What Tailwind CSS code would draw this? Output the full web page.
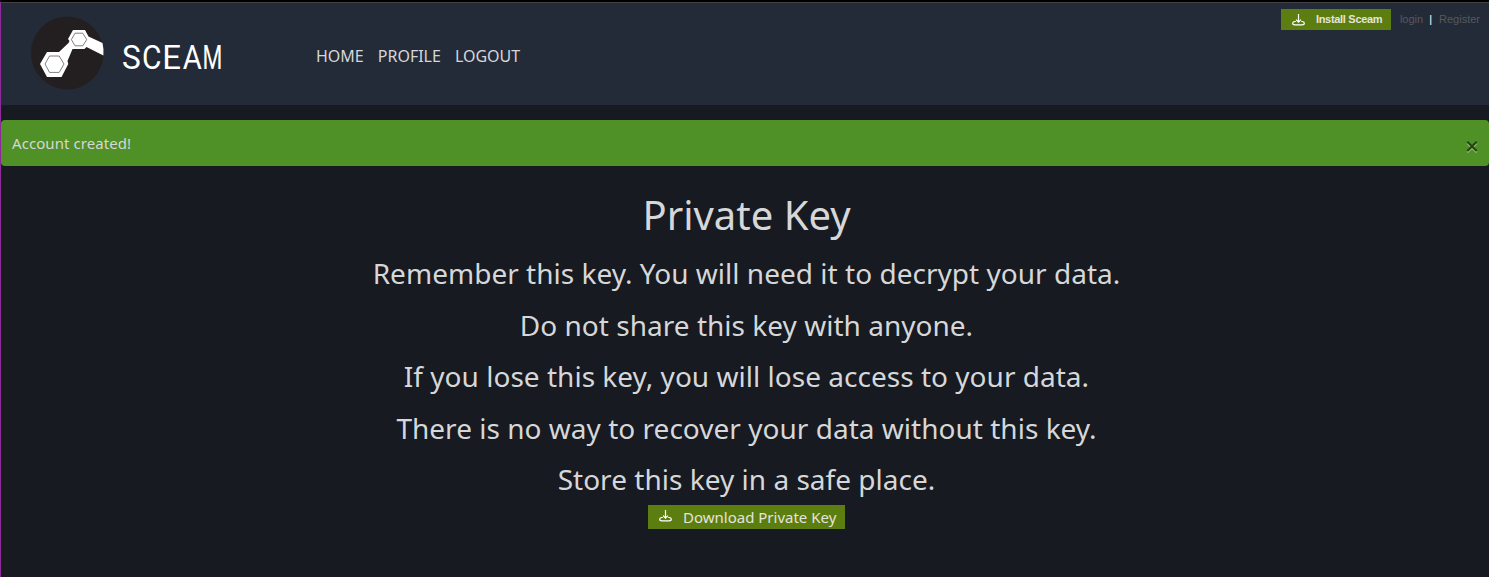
<!DOCTYPE html>
<html lang="en">
<head>
<meta charset="utf-8">
<title>Sceam</title>
<script src="https://cdn.jsdelivr.net/npm/@tailwindcss/browser@4"></script>
</head>
<body class="h-[577px] overflow-hidden border-t-2 border-black bg-[#171a21] font-['Noto_Sans',sans-serif] text-[#d6d7d8]">
<div class="h-[575px] border-l border-[#8f2a9a]">
  <header class="flex h-[103px] items-start border-t border-[#424242] bg-[#242b38]">
    <svg class="ml-[29px] mt-[12px] h-20 w-[200px] shrink-0" viewBox="30 15 200 80">
      <circle cx="67.3" cy="53" r="36.4" fill="#231f20"/>
      <path d="M47 52H59L68.5 43L69.5 41L68 39L73 30H85L88.5 36.5L102.5 43Q104 49 103.4 55.5L86.5 47L84.5 49H72.5L67.5 61L68.3 64L61.5 77H47L40 64Z" fill="#fff"/>
      <path d="M49.5 56H59.2L64 64L59.2 72.4H49.5L45 64ZM75 33.2H82.8L86.7 39.6L82.8 45.8H75L71.4 39.6Z" fill="none" stroke="#55565a" stroke-width=".75"/>
      <g fill="#fff" font-family="Roboto, sans-serif" font-size="34">
        <text transform="translate(122 69) scale(.93 1)">S</text>
        <text transform="translate(142 69) scale(.88 1)">C</text>
        <text transform="translate(162.3 69) scale(.97 1)">E</text>
        <text transform="translate(182.8 69) scale(.86 1)">A</text>
        <text transform="translate(202.6 69) scale(.67 1)">M</text>
      </g>
    </svg>
    <nav class="ml-[86px] mt-[41px] flex gap-[14px] text-base leading-6">
      <a>HOME</a><a>PROFILE</a><a>LOGOUT</a>
    </nav>
    <div class="ml-auto mr-[9px] mt-[6px] flex items-center font-['Liberation_Sans',sans-serif] text-[11px] leading-[21px] text-[#56595e]">
      <a class="flex h-[21px] w-[110px] items-center bg-[#5c7e10] text-[#e5e4dc]">
        <svg class="ml-[11px] mr-[11px] h-3 w-[13px]" viewBox="0 0 13 12" fill="none" stroke="#fff" stroke-width="1.2"><path d="M6.5 0V8M4 5.6L6.5 8.2L9 5.6M3.8 7.5H2.5Q.7 7.9.7 9.3Q.7 10.9 3 10.9H10Q12.3 10.9 12.3 9.3Q12.3 7.9 10.5 7.5H9.2"/></svg>
        <span class="font-bold tracking-[-0.3px]">Install Sceam</span>
      </a>
      <a class="ml-[9px]">login</a><span class="ml-[6px] mr-[7px] text-white">|</span><a>Register</a>
    </div>
  </header>
  <div class="mt-[15px] flex h-[46px] items-center justify-between rounded-[4px] bg-[#4f9027] pl-[11px] pr-[11px]">
    <span class="text-[15px] leading-6 tracking-[0.07px]">Account created!</span>
    <svg class="mt-[6px] h-[13px] w-[12px]" viewBox="0 0 12 13" fill="none" stroke-width="2"><path d="M1.3 3.2L10.7 12.4M10.7 3.2L1.3 12.4" stroke="#91bb78"/><path d="M1.3 1.8L10.7 11M10.7 1.8L1.3 11" stroke="#25430f"/></svg>
  </div>
  <main class="flex flex-col items-center pl-[3px]">
    <h1 class="mt-[25px] h-[57px] text-[40px] leading-[48px]">Private Key</h1>
    <div class="grid h-[257px] auto-rows-[51.5px] text-center text-[28px] leading-[51.5px] tracking-[0.02px]">
      <h3>Remember this key. You will need it to decrypt your data.</h3>
      <h3>Do not share this key with anyone.</h3>
      <h3>If you lose this key, you will lose access to your data.</h3>
      <h3>There is no way to recover your data without this key.</h3>
      <h3>Store this key in a safe place.</h3>
    </div>
    <a class="flex h-6 w-[197px] items-center bg-[#5c7e10] text-[15px] leading-6 text-[#e5e4dc]">
      <svg class="ml-[11px] mr-[11px] mb-[2px] h-3 w-[13px]" viewBox="0 0 13 12" fill="none" stroke="#fff" stroke-width="1.2"><path d="M6.5 0V8M4 5.6L6.5 8.2L9 5.6M3.8 7.5H2.5Q.7 7.9.7 9.3Q.7 10.9 3 10.9H10Q12.3 10.9 12.3 9.3Q12.3 7.9 10.5 7.5H9.2"/></svg>
      <span class="whitespace-nowrap">Download Private Key</span>
    </a>
  </main>
</div>
</body>
</html>
